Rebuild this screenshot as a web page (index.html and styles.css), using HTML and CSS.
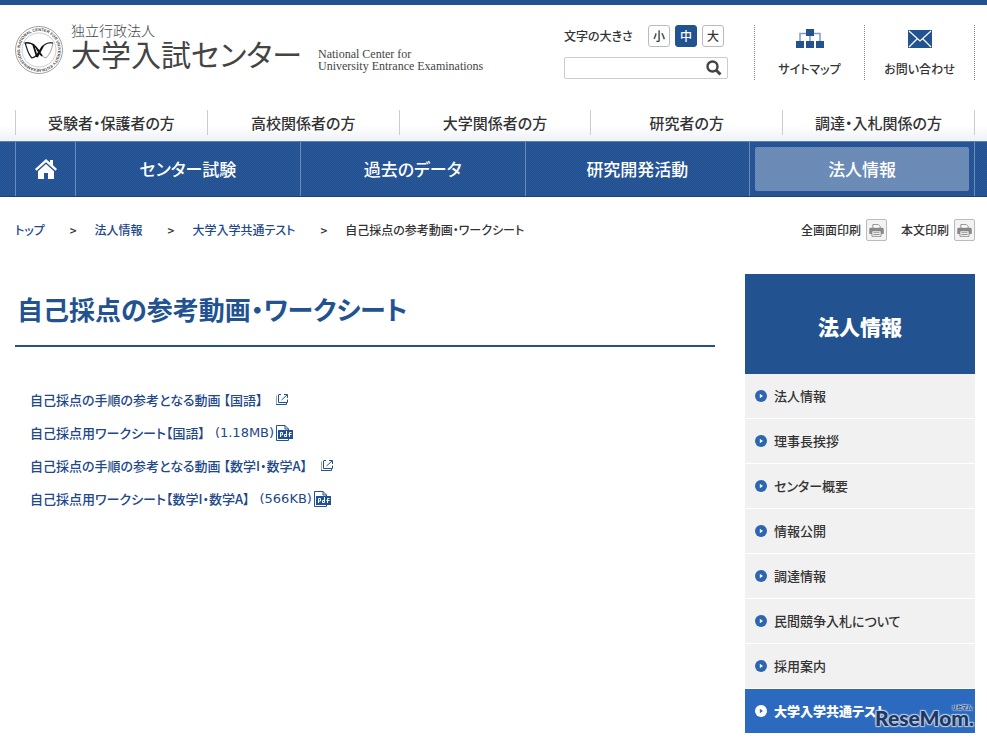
FILE: index.html
```html
<!DOCTYPE html>
<html lang="ja">
<head>
  <meta charset="UTF-8" />
  <meta name="viewport" content="width=device-width, initial-scale=1.0" />
  <title>自己採点の参考動画・ワークシート - 大学入試センター</title>
  <link rel="stylesheet" href="styles.css">
</head>
<body>
  <svg class="defs" aria-hidden="true">
    <symbol id="external" viewBox="0 0 12 11">
      <path d="M0 1.500V10.500h10.500V8M2.500 1v7.500h9V5.500M5 .500h-2.500M8 .500h3.500V4M5.500 6L11 1" fill="none" stroke="currentColor"/>
    </symbol>
    <symbol id="pdf" viewBox="0 0 17 16">
      <path d="M.5.500H9L12.500 4v11.500H.5z" fill="#fff" stroke="currentColor"/>
      <path d="M9 .5V4h3.500" fill="none" stroke="currentColor"/>
      <path d="M2 5h15v9H2z" fill="currentColor"/>
      <path d="M4.500 12V7.500H6.500v2.500H4.500M10.500 6v5.500H8.500v-2h2M13.500 12v-4.500h2M12.500 9.500h3" fill="none" stroke="#fff"/>
    </symbol>
    <symbol id="printer" viewBox="0 0 21 21">
      <path d="M6.500 9V4.500h6l2 2V9" fill="#fff" stroke="#888"/>
      <path d="M2.500 9l1-1h14l1 1v6h-16z" fill="#888"/>
      <path d="M5.500 11.500h10v6h-10z" fill="#fff" stroke="#888"/>
      <path d="M7 13.500h7M7 15.500h7" stroke="#888"/>
    </symbol>
    <symbol id="arrow" viewBox="0 0 12 12">
      <circle cx="6" cy="6" r="6" fill="currentColor"/>
      <path class="arrow-tip" d="M4.800 3.800L8 6 4.800 8.200z"/>
    </symbol>
  </svg>

  <header class="header">
    <div class="wrap header-inner">
      <a class="logo" href="#">
        <svg class="emblem" viewBox="0 0 48 48" role="img" aria-label="National Center for University Entrance Examinations">
          <defs><path id="ring" d="M24 43A19 19 0 1 1 24.100 43"/></defs>
          <circle cx="24" cy="24" r="23.500" fill="none" stroke="#777" stroke-width=".7"/>
          <circle cx="24" cy="24" r="17" fill="none" stroke="#aaa" stroke-width=".6"/>
          <text class="ring-text"><textPath href="#ring">EXAMINATIONS NATIONAL CENTER FOR UNIVERSITY ENTRANCE</textPath></text>
          <path d="M24 25C20 18 16 16 10 17c2 4 2 10 7 15 3-1 6-3 7-7z" fill="none" stroke="#222" stroke-width="1.200"/>
          <path d="M24 25c3-6 7-9 14-8-1 6-3 11-7 15-3-1-6-3-7-7z" fill="none" stroke="#777" stroke-width=".7"/>
          <path d="M10 17c5-1 9 1 12 6l2 3 2-3c3-5 7-7 12-6" fill="none" stroke="#111" stroke-width="1.200"/>
          <path d="M18 18l4 13M22 23l5 7M28 20l-6 11" fill="none" stroke="#111" stroke-width="1.800"/>
        </svg>
        <span class="logo-ja">
          <span class="logo-sub">独立行政法人</span>
          <span class="logo-name">大学入試センター</span>
        </span>
        <span class="logo-en">National Center for<br>University Entrance Examinations</span>
      </a>

      <div class="tools">
        <div class="font-size">
          <span class="font-label">文字の大きさ</span>
          <button type="button">小</button>
          <button type="button" class="active">中</button>
          <button type="button">大</button>
        </div>
        <form class="search">
          <input type="text" aria-label="サイト内検索">
          <button type="submit" aria-label="検索">
            <svg width="16" height="16" viewBox="0 0 16 16"><circle cx="6.500" cy="6.500" r="5" fill="none" stroke="#444" stroke-width="2.400"/><path d="M10 10l4.500 4.500" stroke="#444" stroke-width="3"/></svg>
          </button>
        </form>
      </div>

      <ul class="quick">
        <li><a href="#">
          <svg width="28" height="20" viewBox="0 0 28 20"><path d="M4 13V4.500h20V13M14 5v8" fill="none" stroke="#7f9dc4" stroke-width="1.500"/><path d="M10 0h8v7h-8zM0 12h8v7H0zM10 12h8v7h-8zM20 12h8v7h-8z" fill="#22528f"/></svg>
          サイトマップ</a></li>
        <li><a href="#">
          <svg width="24" height="20" viewBox="0 0 24 20"><path d="M0 1h24v18H0z" fill="#22528f"/><path d="M1 2l11 10L23 2M1 18l8.500-8.500M23 18l-8.500-8.500" fill="none" stroke="#fff" stroke-width="1.200"/></svg>
          お問い合わせ</a></li>
      </ul>
    </div>

    <nav class="audience">
      <ul class="wrap">
        <li><a href="#">受験者・保護者の方</a></li>
        <li><a href="#">高校関係者の方</a></li>
        <li><a href="#">大学関係者の方</a></li>
        <li><a href="#">研究者の方</a></li>
        <li><a href="#">調達・入札関係の方</a></li>
      </ul>
    </nav>
  </header>

  <nav class="global">
    <ul class="wrap">
      <li class="home"><a href="#" aria-label="トップ">
        <svg width="22" height="20" viewBox="0 0 22 20"><path d="M11 0L0 10l1.500 1.800L11 3.200l9.500 8.600L22 10l-4-3.700V1h-3v2.600z" fill="#fff"/><path d="M11 5l-8 7.200V20h6v-6h4v6h6v-7.800z" fill="#fff"/></svg>
      </a></li>
      <li><a href="#">センター試験</a></li>
      <li><a href="#">過去のデータ</a></li>
      <li><a href="#">研究開発活動</a></li>
      <li class="current"><a href="#">法人情報</a></li>
    </ul>
  </nav>

  <div class="wrap path">
    <ol class="breadcrumb">
      <li><a href="#">トップ</a></li>
      <li><a href="#">法人情報</a></li>
      <li><a href="#">大学入学共通テスト</a></li>
      <li>自己採点の参考動画・ワークシート</li>
    </ol>
    <div class="print">
      <button type="button">全画面印刷<svg><use href="#printer"/></svg></button>
      <button type="button">本文印刷<svg><use href="#printer"/></svg></button>
    </div>
  </div>

  <div class="wrap content">
    <main>
      <h1>自己採点の参考動画・ワークシート</h1>
      <ul class="links">
        <li><a href="#">自己採点の手順の参考となる動画 【国語】<svg class="external"><use href="#external"/></svg></a></li>
        <li><a href="#">自己採点用ワークシート【国語】<span class="size">(1.18MB)</span><svg class="pdf"><use href="#pdf"/></svg></a></li>
        <li><a href="#">自己採点の手順の参考となる動画 【数学I・数学A】<svg class="external"><use href="#external"/></svg></a></li>
        <li><a href="#">自己採点用ワークシート【数学I・数学A】<span class="size">(566KB)</span><svg class="pdf"><use href="#pdf"/></svg></a></li>
      </ul>
    </main>

    <aside class="side">
      <h2>法人情報</h2>
      <ul>
        <li><a href="#"><svg><use href="#arrow"/></svg>法人情報</a></li>
        <li><a href="#"><svg><use href="#arrow"/></svg>理事長挨拶</a></li>
        <li><a href="#"><svg><use href="#arrow"/></svg>センター概要</a></li>
        <li><a href="#"><svg><use href="#arrow"/></svg>情報公開</a></li>
        <li><a href="#"><svg><use href="#arrow"/></svg>調達情報</a></li>
        <li><a href="#"><svg><use href="#arrow"/></svg>民間競争入札について</a></li>
        <li><a href="#"><svg><use href="#arrow"/></svg>採用案内</a></li>
        <li class="current"><a href="#"><svg><use href="#arrow"/></svg>大学入学共通テスト</a></li>
      </ul>
      <div class="watermark"><span class="ruby">リセマム</span>ReseMom.</div>
    </aside>
  </div>
</body>
</html>
```
FILE: styles.css
```css
* {
  box-sizing: border-box;
}
body {
  margin: 0;
  border-top: 5px solid #22528f;
  background: #fff;
  color: #333;
  font-family: "Noto Sans CJK JP", sans-serif;
  font-feature-settings: "palt";
  font-weight: 500;
  font-size: 13px;
  line-height: 20px;
}
ul, ol {
  margin: 0;
  padding: 0;
  list-style: none;
}
a {
  color: inherit;
  text-decoration: none;
}
button, input {
  font: inherit;
  color: inherit;
  padding: 0;
}
svg {
  flex: none;
}
.defs {
  display: none;
}
.wrap {
  margin: 0 12px 0 15px;
}

/* header */
.header-inner {
  display: flex;
  align-items: flex-start;
  padding-top: 20px;
  height: 105px;
}
.logo {
  display: flex;
  color: #444;
}
.emblem {
  width: 48px;
  height: 48px;
  margin: 1px 8px 0 0;
  overflow: visible;
}
.ring-text {
  font: bold 4px "Liberation Sans", sans-serif;
  fill: #444;
}
.logo-ja {
  display: flex;
  flex-direction: column;
  font-weight: 400;
}
.logo-sub {
  font-size: 14px;
  line-height: 10px;
  font-weight: 300;
}
.logo-name {
  font-size: 30px;
  line-height: 36px;
}
.logo-en {
  margin: 23px 0 0 16px;
  font: 12px/12px "Liberation Serif", serif;
}
.tools {
  width: 164px;
  margin-left: auto;
}
.font-size {
  display: flex;
  align-items: center;
  gap: 5px;
  font-size: 12px;
}
.font-label {
  margin-right: auto;
}
.font-size button {
  width: 22px;
  height: 22px;
  border: 1px solid #bbb;
  border-radius: 3px;
  background: #fff;
  line-height: 20px;
}
.font-size .active {
  border-color: #22528f;
  background: #22528f;
  color: #fff;
}
.font-size button:last-child {
  margin-right: 4px;
}
.search {
  display: flex;
  margin-top: 10px;
  height: 22px;
  border: 1px solid #ccc;
  border-radius: 2px;
}
.search input {
  flex: 1;
  min-width: 0;
  border: 0;
  background: none;
}
.search button {
  display: flex;
  align-items: center;
  margin-right: 5px;
  border: 0;
  background: none;
}
.quick {
  display: flex;
  margin-left: 26px;
  border-right: 1px dotted #888;
}
.quick li {
  width: 110px;
  height: 55px;
  border-left: 1px dotted #888;
}
.quick a {
  display: flex;
  flex-direction: column;
  align-items: center;
  gap: 10px;
  padding-top: 4px;
  font-size: 12px;
}
.audience {
  height: 31px;
  background: linear-gradient(#fff 50%, #eef1f6);
}
.audience ul {
  display: flex;
  border-right: 1px solid #ccc;
  height: 25px;
}
.audience li {
  flex: 1;
  border-left: 1px solid #ccc;
  text-align: center;
  font-size: 15px;
  line-height: 25px;
}

/* global nav */
.global {
  border-top: 1px solid #5b7fb0;
  border-bottom: 1px solid #1c4273;
  background: repeating-conic-gradient(#215193 0 25%, #2a5896 0 50%) 0 0 / 2px 2px;
}
.global ul {
  display: flex;
  border-right: 1px solid #6a8cba;
}
.global li {
  flex: 1;
  border-left: 1px solid #6a8cba;
}
.global a {
  display: flex;
  align-items: center;
  justify-content: center;
  height: 54px;
  color: #fff;
  font-size: 17px;
}
.global .home {
  flex: 0 0 60px;
}
.global .current a {
  height: 44px;
  margin: 5px;
  border-radius: 2px;
  background: rgba(255, 255, 255, 0.32);
}

/* breadcrumb */
.path {
  display: flex;
  justify-content: space-between;
  align-items: center;
  padding-top: 22px;
  font-size: 12px;
}
.breadcrumb {
  display: flex;
}
.breadcrumb li + li::before {
  content: ">";
  margin: 0 18px 0 25px;
}
.breadcrumb a {
  color: #22478a;
}
.print {
  display: flex;
  gap: 14px;
}
.print button {
  display: flex;
  align-items: center;
  gap: 5px;
  border: 0;
  background: none;
}
.print svg {
  width: 21px;
  height: 22px;
  border: 1px solid #bbb;
  border-radius: 2px;
  background: #f3f3f3;
}

/* content */
.content {
  display: grid;
  grid-template-columns: 1fr 230px;
  gap: 30px;
  padding-top: 33px;
}
h1 {
  margin: 0;
  padding: 16px 2px 18px;
  border-bottom: 2px solid #22528f;
  color: #22528f;
  font-size: 26px;
  line-height: 37px;
}
.links {
  padding: 36px 15px;
  color: #22478a;
}
.links a {
  display: flex;
  align-items: center;
  height: 33px;
}
.links .size {
  margin: 0 2px 0 10px;
  font: 13px "DejaVu Sans", sans-serif;
}
.external {
  width: 12px;
  height: 11px;
  margin-left: 14px;
}
.pdf {
  width: 17px;
  height: 16px;
}
.links svg {
  color: #22528f;
}

/* side menu */
.side {
  position: relative;
}
.side h2 {
  margin: 0;
  background: #22528f;
  color: #fff;
  text-align: center;
  font-size: 21px;
  font-weight: 900;
  line-height: 104px;
  height: 100px;
}
.side ul {
  display: grid;
  gap: 1px;
}
.side a {
  display: flex;
  align-items: center;
  gap: 7px;
  height: 44px;
  padding-left: 10px;
  background: #f1f1f1;
}
.side svg {
  width: 12px;
  height: 12px;
  color: #2c66b0;
}
.arrow-tip {
  fill: var(--tip, #fff);
}
.side .current {
  --tip: #2c6abf;
}
.side .current a {
  background: #2c6abf;
  color: #fff;
  font-weight: 900;
}
.side .current svg {
  color: #fff;
}
.watermark {
  position: absolute;
  right: 1px;
  bottom: 1px;
  color: #1d3763;
  font: 900 21px/28px "Lato", sans-serif;
  text-shadow: 1px 1px 1px #b9cbe4, -1px -1px 1px #b9cbe4, 1px -1px 1px #b9cbe4, -1px 1px 1px #b9cbe4;
}
.ruby {
  position: absolute;
  right: 2px;
  top: 0;
  font: 700 5px/6px "Noto Sans CJK JP", sans-serif;
}
```
